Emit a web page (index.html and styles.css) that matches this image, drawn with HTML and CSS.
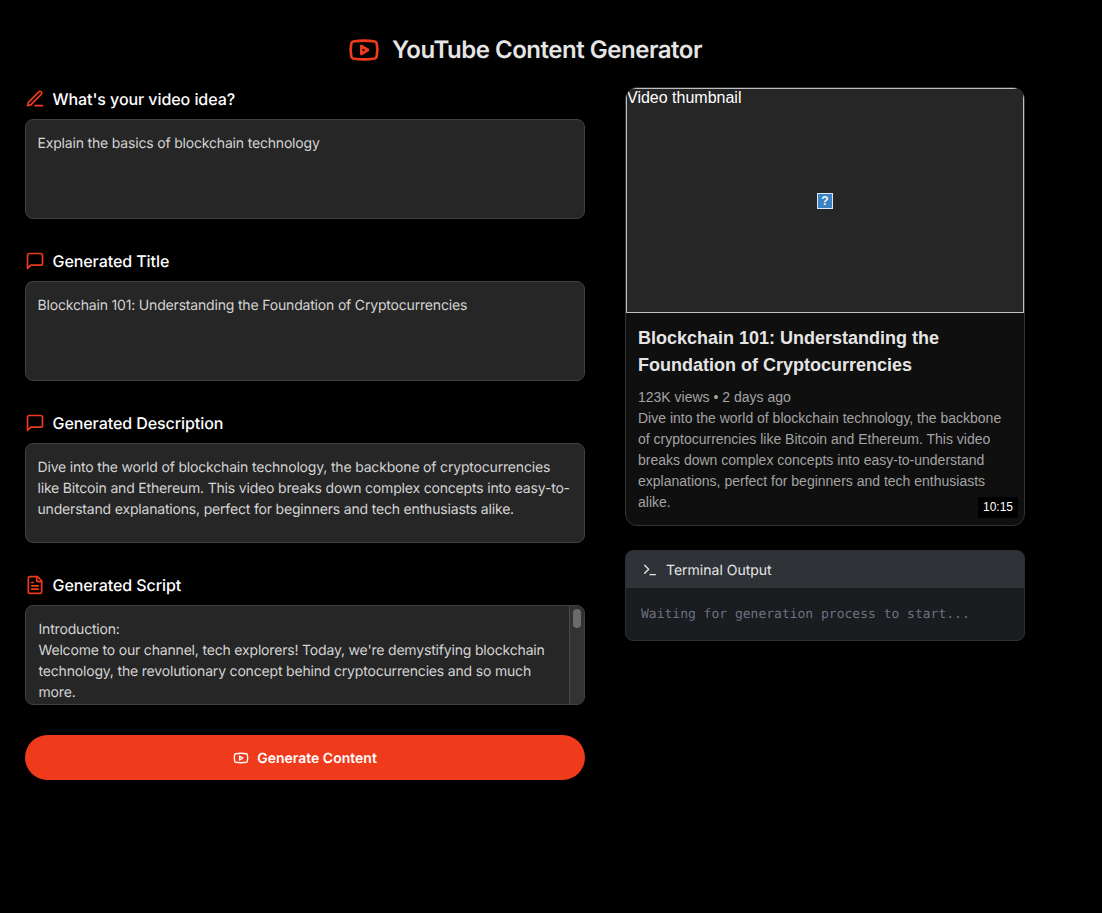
FILE: index.html
```html
<!DOCTYPE html>
<html lang="en">
<head>
<meta charset="utf-8">
<title>YouTube Content Generator</title>
<link rel="stylesheet" href="styles.css">
</head>
<body>
<div class="page">
  <h1 class="heading">
    <svg class="heading-icon" viewBox="0 0 24 24"><path d="M2.5 17a24.12 24.12 0 0 1 0-10 2 2 0 0 1 1.4-1.4 49.56 49.56 0 0 1 16.2 0A2 2 0 0 1 21.5 7a24.12 24.12 0 0 1 0 10 2 2 0 0 1-1.4 1.4 49.55 49.55 0 0 1-16.2 0A2 2 0 0 1 2.5 17"/><path d="m10 15 5-3-5-3z"/></svg>
    <span>YouTube Content Generator</span>
  </h1>
  <div class="columns">
    <div class="left">
      <section class="field">
        <label class="label">
          <svg class="icon" viewBox="0 0 24 24"><path d="M12 20h9"/><path d="M16.5 3.5a2.12 2.12 0 0 1 3 3L7 19l-4 1 1-4Z"/></svg>
          What's your video idea?
        </label>
        <div class="box">Explain the basics of blockchain technology</div>
      </section>
      <section class="field">
        <label class="label">
          <svg class="icon" viewBox="0 0 24 24"><path d="M21 15a2 2 0 0 1-2 2H7l-4 4V5a2 2 0 0 1 2-2h14a2 2 0 0 1 2 2z"/></svg>
          Generated Title
        </label>
        <div class="box">Blockchain 101: Understanding the Foundation of Cryptocurrencies</div>
      </section>
      <section class="field">
        <label class="label">
          <svg class="icon" viewBox="0 0 24 24"><path d="M21 15a2 2 0 0 1-2 2H7l-4 4V5a2 2 0 0 1 2-2h14a2 2 0 0 1 2 2z"/></svg>
          Generated Description
        </label>
        <div class="box">Dive into the world of blockchain technology, the backbone of cryptocurrencies like Bitcoin and Ethereum. This video breaks down complex concepts into easy-to-understand explanations, perfect for beginners and tech enthusiasts alike.</div>
      </section>
      <section class="field">
        <label class="label">
          <svg class="icon" viewBox="0 0 24 24"><path d="M15 2H6a2 2 0 0 0-2 2v16a2 2 0 0 0 2 2h12a2 2 0 0 0 2-2V7Z"/><path d="M14 2v4a2 2 0 0 0 2 2h4"/><path d="M10 9H8"/><path d="M16 13H8"/><path d="M16 17H8"/></svg>
          Generated Script
        </label>
        <div class="box box-script">
          <div class="script-text">Introduction:
Welcome to our channel, tech explorers! Today, we're demystifying blockchain technology, the revolutionary concept behind cryptocurrencies and so much more.</div>
          <div class="scrollbar"><div class="scrollbar-thumb"></div></div>
        </div>
      </section>
      <button class="generate" type="button">
        <svg class="generate-icon" viewBox="0 0 24 24"><path d="M2.5 17a24.12 24.12 0 0 1 0-10 2 2 0 0 1 1.4-1.4 49.56 49.56 0 0 1 16.2 0A2 2 0 0 1 21.5 7a24.12 24.12 0 0 1 0 10 2 2 0 0 1-1.4 1.4 49.55 49.55 0 0 1-16.2 0A2 2 0 0 1 2.5 17"/><path d="m10 15 5-3-5-3z"/></svg>
        Generate Content
      </button>
    </div>
    <div class="right">
      <article class="card">
        <div class="thumb">
          <span class="thumb-alt">Video thumbnail</span>
          <span class="broken">?</span>
        </div>
        <div class="card-body">
          <h2 class="card-title">Blockchain 101: Understanding the Foundation of Cryptocurrencies</h2>
          <p class="card-meta">123K views • 2 days ago</p>
          <p class="card-desc">Dive into the world of blockchain technology, the backbone of cryptocurrencies like Bitcoin and Ethereum. This video breaks down complex concepts into easy-to-understand explanations, perfect for beginners and tech enthusiasts alike.</p>
          <span class="duration">10:15</span>
        </div>
      </article>
      <div class="terminal">
        <div class="terminal-head">
          <svg class="terminal-icon" viewBox="0 0 24 24"><path d="m4 17 6-6-6-6"/><path d="M12 19h8"/></svg>
          Terminal Output
        </div>
        <div class="terminal-body">Waiting for generation process to start...</div>
      </div>
    </div>
  </div>
</div>
</body>
</html>
```
FILE: styles.css
```css
* { box-sizing: border-box; }
html, body { margin: 0; background: #000; }
body { font-family: Inter, "Liberation Sans", sans-serif; color: #e5e5e5; height: 913px; overflow: hidden; text-rendering: geometricPrecision; }
.page { width: 1050px; padding: 32px 25px 0; }
.heading { display: flex; align-items: center; justify-content: center; gap: 12px; margin: 0 0 19px; height: 36px; font-size: 24px; line-height: 36px; font-weight: 600; letter-spacing: -0.48px; color: #e5e5e5; }
.heading-icon { width: 32px; height: 32px; fill: none; stroke: #ef3a1b; stroke-width: 2; stroke-linecap: round; stroke-linejoin: round; }
.columns { display: flex; gap: 40px; align-items: flex-start; }
.left { width: 560px; display: flex; flex-direction: column; }
.right { width: 400px; display: flex; flex-direction: column; gap: 24px; }
.field { margin-bottom: 30px; }
.label { display: flex; align-items: center; gap: 7.5px; height: 24px; margin-bottom: 8px; font-size: 16px; line-height: 24px; font-weight: 500; letter-spacing: -0.07px; color: #fff; }
.icon { width: 20px; height: 20px; fill: none; stroke: #ef3a1b; stroke-width: 2; stroke-linecap: round; stroke-linejoin: round; }
.box { height: 100px; padding: 13px 12px 11px 11.5px; background: #262626; border: 1px solid #404040; border-radius: 8px; font-size: 14px; line-height: 21px; letter-spacing: -0.18px; color: #d4d4d4; overflow: hidden; }
.box-script { display: flex; padding: 0; }
.script-text { flex: 1; padding: 13px 12px 0 12.5px; white-space: pre-wrap; overflow: hidden; }
.scrollbar { flex: none; width: 15px; padding: 3px 3px 0 3px; background: #333; border-left: 1px solid #4a4a4a; }
.scrollbar-thumb { height: 19px; background: #6b6b6b; border-radius: 5px; }
.generate { display: flex; align-items: center; justify-content: center; gap: 8px; height: 45px; width: 100%; padding: 1px 0 0; border: 0; border-radius: 23px; background: #ef3a1b; color: #fff; font-family: inherit; font-size: 14px; font-weight: 600; text-rendering: geometricPrecision; }
.generate-icon { width: 16px; height: 16px; fill: none; stroke: #fff; stroke-width: 2; stroke-linecap: round; stroke-linejoin: round; }
.card { background: #0f0f0f; border: 1px solid #333; border-radius: 12px; overflow: hidden; font-family: "Liberation Sans", Arial, sans-serif; text-rendering: auto; }
.thumb { position: relative; height: 225px; background: #262626; border: 1px solid #c0c0c0; color: #fff; font-size: 16px; line-height: 18px; }
.thumb-alt { display: block; }
.broken { position: absolute; left: 190px; top: 104px; width: 16px; height: 16px; background: #3b82c4; border: 1px solid #dbe8f5; color: #f2f7fc; font-size: 12px; font-weight: 700; line-height: 14px; text-align: center; }
.card-body { position: relative; padding: 12px; }
.card-title { margin: 0 0 8px; font-size: 18px; line-height: 27px; font-weight: 700; color: #e5e5e5; }
.card-meta, .card-desc { margin: 0; font-size: 14px; line-height: 21px; color: #a3a3a3; }
.duration { position: absolute; right: 6px; bottom: 7px; padding: 0 5px; height: 21px; background: #000; color: #fff; font-size: 12px; line-height: 21px; }
.terminal { background: #1a1c1f; border: 1px solid #2c3035; border-radius: 8px; overflow: hidden; }
.terminal-head { display: flex; align-items: center; gap: 8px; height: 37px; padding: 1px 16px 0; background: #2f3337; font-size: 14px; color: #e5e5e5; }
.terminal-icon { width: 16px; height: 16px; margin-top: -1px; fill: none; stroke: #e5e5e5; stroke-width: 2; stroke-linecap: round; stroke-linejoin: round; }
.terminal-body { height: 52px; padding: 17px 15px 0; font-family: "DejaVu Sans Mono", monospace; font-size: 13px; line-height: 20px; color: #6b7280; }
```
